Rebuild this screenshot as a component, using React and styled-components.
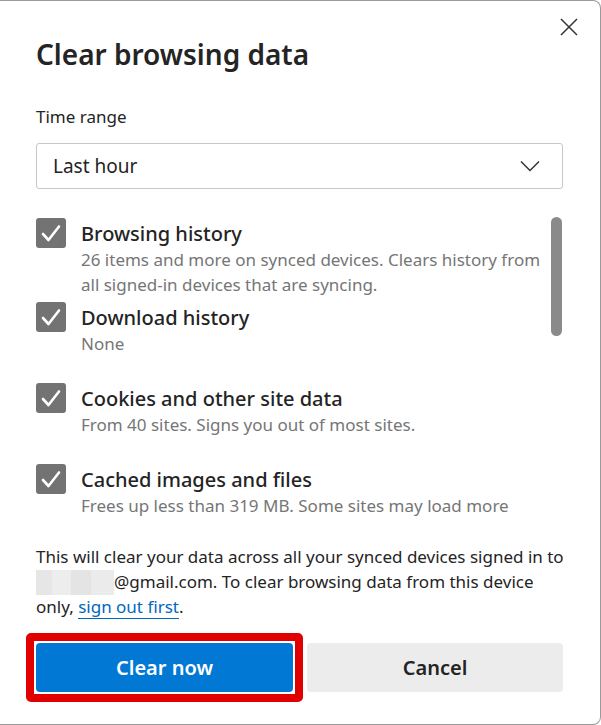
import React from 'react';
import styled, { createGlobalStyle } from 'styled-components';

const textDark = '#242424';
const textGrey = '#767676';
const boxGrey = '#737373';
const blue = '#0078d4';

const items = [
    {
        label: 'Browsing history',
        lines: ['26 items and more on synced devices. Clears history from', 'all signed-in devices that are syncing.'],
    },
    { label: 'Download history', lines: ['None'] },
    { label: 'Cookies and other site data', lines: ['From 40 sites. Signs you out of most sites.'] },
    { label: 'Cached images and files', lines: ['Frees up less than 319 MB. Some sites may load more'] },
];

function CheckIcon() {
    return (
        <svg width="30" height="30" viewBox="0 0 30 30">
            <path d="M7 16 L12.5 22 L23 8.5" fill="none" stroke="#fff" strokeWidth="2.6" strokeLinecap="round" strokeLinejoin="round" />
        </svg>
    );
}

function App() {
    return (
        <>
            <GlobalStyle />
            <Dialog>
                <Header>
                    <Title>Clear browsing data</Title>
                    <CloseButton aria-label="Close">
                        <svg width="18" height="18" viewBox="0 0 18 18">
                            <path d="M1 1 L17 17 M17 1 L1 17" stroke="#333" strokeWidth="1.5" />
                        </svg>
                    </CloseButton>
                </Header>

                <FieldLabel>Time range</FieldLabel>
                <Select>
                    <span>Last hour</span>
                    <svg width="20" height="12" viewBox="0 0 20 12">
                        <path d="M1 1.5 L10 10.5 L19 1.5" fill="none" stroke="#333" strokeWidth="1.5" />
                    </svg>
                </Select>

                <ListArea>
                    <List>
                        {items.map((item) => (
                            <Item key={item.label}>
                                <Checkbox>
                                    <CheckIcon />
                                </Checkbox>
                                <ItemText>
                                    <ItemLabel>{item.label}</ItemLabel>
                                    {item.lines.map((line) => (
                                        <ItemDesc key={line}>{line}</ItemDesc>
                                    ))}
                                </ItemText>
                            </Item>
                        ))}
                    </List>
                    <ScrollTrack>
                        <ScrollThumb />
                    </ScrollTrack>
                </ListArea>

                <Notice>
                    <NoticeLine>This will clear your data across all your synced devices signed in to</NoticeLine>
                    <NoticeLine>
                        <Blurred />@gmail.com. To clear browsing data from this device
                    </NoticeLine>
                    <NoticeLine>
                        only, <Link href="#">sign out first</Link>.
                    </NoticeLine>
                </Notice>

                <Buttons>
                    <Highlight>
                        <Button primary>Clear now</Button>
                    </Highlight>
                    <Button>Cancel</Button>
                </Buttons>
            </Dialog>
        </>
    );
}

export default App;

const GlobalStyle = createGlobalStyle`
    html, body {
        margin: 0;
        background: #fff;
    }
    body {
        font-family: "Noto Sans", "Open Sans", sans-serif;
        color: ${textDark};
    }
`;

const Dialog = styled.div`
    width: 601px;
    height: 725px;
    box-sizing: border-box;
    padding: 0 37px 0 36px;
    border: 1px solid #9a9a9a;
    border-left: none;
    border-radius: 0 8px 8px 0;
    background: #fff;
    overflow: hidden;
`;

const Header = styled.div`
    display: flex;
    justify-content: space-between;
    align-items: flex-start;
    height: 104px;
`;

const Title = styled.h1`
    margin: 34px 0 0;
    font-size: 28px;
    line-height: 38px;
    font-weight: 600;
    color: ${textDark};
`;

const CloseButton = styled.button`
    margin: 17px -15px 0 0;
    padding: 0;
    border: none;
    background: none;
    width: 18px;
    height: 18px;
    display: flex;
`;

const FieldLabel = styled.div`
    font-size: 17px;
    line-height: 24px;
    color: ${textDark};
    margin-bottom: 14px;
`;

const Select = styled.div`
    height: 46px;
    box-sizing: border-box;
    border: 1px solid #c6c6c6;
    border-radius: 3px;
    display: flex;
    align-items: center;
    justify-content: space-between;
    padding: 0 22px 0 16px;
    font-size: 19px;
    color: ${textDark};
`;

const ListArea = styled.div`
    display: flex;
    margin-top: 28px;
    height: 328px;
    overflow: hidden;
`;

const List = styled.div`
    flex: 1;
    display: flex;
    flex-direction: column;
`;

const Item = styled.div`
    flex: none;
    display: flex;
    min-height: 77px;
    padding-bottom: 4px;
`;

const Checkbox = styled.div`
    width: 30px;
    height: 30px;
    flex: none;
    border-radius: 3px;
    background: ${boxGrey};
    margin-top: 1px;
    margin-right: 15px;
`;

const ItemText = styled.div`
    display: flex;
    flex-direction: column;
    padding-top: 3px;
`;

const ItemLabel = styled.div`
    font-size: 20px;
    line-height: 27px;
    font-weight: 500;
    color: ${textDark};
    white-space: nowrap;
`;

const ItemDesc = styled.div`
    font-size: 17px;
    line-height: 25px;
    color: ${textGrey};
    white-space: nowrap;
`;

const ScrollTrack = styled.div`
    width: 11px;
    flex: none;
    margin-right: 1px;
`;

const ScrollThumb = styled.div`
    width: 11px;
    height: 119px;
    border-radius: 6px;
    background: #8a8a8a;
`;

const Notice = styled.div`
    font-size: 17px;
    line-height: 24.5px;
    color: ${textDark};
    margin-bottom: 14px;
`;

const NoticeLine = styled.div`
    white-space: nowrap;
`;

const Blurred = styled.span`
    display: inline-block;
    width: 78px;
    height: 25px;
    vertical-align: -7px;
    background:
        linear-gradient(90deg, #e6e6e6 0 20%, #ededed 20% 45%, #e4e4e4 45% 70%, #ebebeb 70% 100%);
`;

const Link = styled.a`
    color: #0067c0;
    text-decoration: none;
    border-bottom: 1px solid #0067c0;
`;

const Buttons = styled.div`
    display: grid;
    grid-template-columns: 277px 1fr;
    gap: 4px;
    margin-left: -10px;
    align-items: center;
`;

const Highlight = styled.div`
    border: 8px solid #e00000;
    border-radius: 5px;
    padding: 2px;
    display: flex;
`;

const Button = styled.button`
    height: 49px;
    width: 100%;
    border: none;
    border-radius: 4px;
    font-family: inherit;
    font-size: 20px;
    font-weight: 600;
    background: ${(p) => (p.primary ? blue : '#ececec')};
    color: ${(p) => (p.primary ? '#fff' : textDark)};
`;
